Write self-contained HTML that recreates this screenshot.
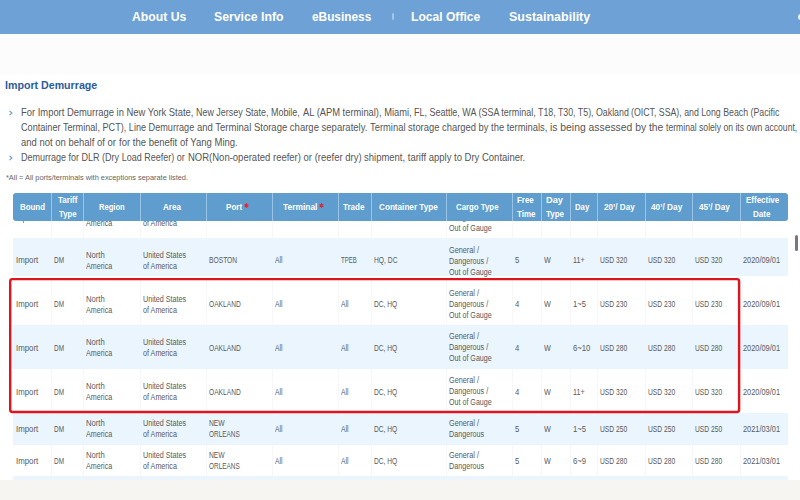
<!DOCTYPE html>
<html><head><meta charset="utf-8"><style>
html,body{margin:0;padding:0;}
body{width:800px;height:500px;overflow:hidden;position:relative;background:#fff;font-family:"Liberation Sans",sans-serif;}
.t{position:absolute;white-space:nowrap;transform-origin:0 0;}
.bar{position:absolute;left:0;top:0;width:800px;height:34px;background:#6ea1d6;}
.band{position:absolute;left:0;top:34px;width:800px;height:41px;background:#fcfcfc;}
.bul{position:absolute;}
.nsep{position:absolute;left:392px;top:12.5px;width:2px;height:7.5px;background:#a3c5ea;border-radius:1px;}
.row{position:absolute;left:13px;width:774.5px;}
.vl{position:absolute;width:1px;background:#f7f7f7;}
.thead{position:absolute;left:13px;top:192.5px;width:774.5px;height:28px;background:#5e9dcd;border-radius:3px;}
.hl{position:absolute;top:192.5px;height:28px;width:1px;background:#9ac3e8;}
.ast{position:absolute;}
.red{position:absolute;left:0;top:0;}
.foot{position:absolute;left:0;top:480.2px;width:800px;height:20px;background:#f7f5f1;}
.sb{position:absolute;left:795px;top:234.5px;width:3px;height:16px;background:#787878;border-radius:1.5px;}
.icn{position:absolute;left:798px;top:13.5px;width:6px;height:6px;border-radius:3px;background:#eef4fb;}
</style></head><body>
<div class="bar"></div>
<div class="band"></div>
<div class="nsep"></div>
<div class="t" style="left:132.00px;top:10.45px;font-size:13px;line-height:13px;color:#fff;font-weight:bold;transform:scaleX(0.9388);">About Us</div><div class="t" style="left:214.25px;top:10.45px;font-size:13px;line-height:13px;color:#fff;font-weight:bold;transform:scaleX(0.9429);">Service Info</div><div class="t" style="left:312.00px;top:10.45px;font-size:13px;line-height:13px;color:#fff;font-weight:bold;transform:scaleX(0.9106);">eBusiness</div><div class="t" style="left:411.25px;top:10.45px;font-size:13px;line-height:13px;color:#fff;font-weight:bold;transform:scaleX(0.9305);">Local Office</div><div class="t" style="left:509.40px;top:10.45px;font-size:13px;line-height:13px;color:#fff;font-weight:bold;transform:scaleX(0.9609);">Sustainability</div><div class="t" style="left:5.25px;top:80.06px;font-size:11px;line-height:11px;color:#2b5b9e;font-weight:bold;transform:scaleX(0.9673);">Import Demurrage</div><div class="t" style="left:21.25px;top:107.28px;font-size:10.5px;line-height:10.5px;color:#555;transform:scaleX(0.8951)">For Import Demurrage in New York State,</div><div class="t" style="left:196.25px;top:107.28px;font-size:10.5px;line-height:10.5px;color:#555;transform:scaleX(0.8508)">New Jersey State, Mobile,</div><div class="t" style="left:302.50px;top:107.28px;font-size:10.5px;line-height:10.5px;color:#555;transform:scaleX(0.8896)">AL (APM terminal), Miami,</div><div class="t" style="left:413.75px;top:107.28px;font-size:10.5px;line-height:10.5px;color:#555;transform:scaleX(0.8539)">FL, Seattle, WA (SSA terminal,</div><div class="t" style="left:538.00px;top:107.28px;font-size:10.5px;line-height:10.5px;color:#555;transform:scaleX(0.8394)">T18, T30, T5), Oakland</div><div class="t" style="left:631.25px;top:107.28px;font-size:10.5px;line-height:10.5px;color:#555;transform:scaleX(0.8357)">(OICT, SSA), and Long Beach (Pacific</div><div class="t" style="left:21.25px;top:122.28px;font-size:10.5px;line-height:10.5px;color:#555;transform:scaleX(0.8687)">Container Terminal, PCT), Line Demurrage</div><div class="t" style="left:197.00px;top:122.28px;font-size:10.5px;line-height:10.5px;color:#555;transform:scaleX(0.9055)">and Terminal Storage charge separately.</div><div class="t" style="left:370.00px;top:122.28px;font-size:10.5px;line-height:10.5px;color:#555;transform:scaleX(0.8940)">Terminal storage charged by the terminals,</div><div class="t" style="left:550.00px;top:122.28px;font-size:10.5px;line-height:10.5px;color:#555;transform:scaleX(0.9860)">is being assessed by the</div><div class="t" style="left:666.25px;top:122.28px;font-size:10.5px;line-height:10.5px;color:#555;transform:scaleX(0.8207)">terminal solely on its own account,</div><div class="t" style="left:21.25px;top:136.88px;font-size:10.5px;line-height:10.5px;color:#555;transform:scaleX(0.9028)">and not on behalf of or</div><div class="t" style="left:118.75px;top:136.88px;font-size:10.5px;line-height:10.5px;color:#555;transform:scaleX(0.9069)">for the benefit of Yang Ming.</div><div class="t" style="left:21.25px;top:152.28px;font-size:10.5px;line-height:10.5px;color:#555;transform:scaleX(0.8581)">Demurrage for DLR (Dry Load Reefer) or</div><div class="t" style="left:187.50px;top:152.28px;font-size:10.5px;line-height:10.5px;color:#555;transform:scaleX(0.9043)">NOR(Non-operated reefer) or (reefer dry)</div><div class="t" style="left:363.75px;top:152.28px;font-size:10.5px;line-height:10.5px;color:#555;transform:scaleX(0.9039)">shipment, tariff apply to Dry Container.</div><div class="t" style="left:5.50px;top:174.27px;font-size:7.5px;line-height:7.5px;color:#666;transform:scaleX(0.9823);">*All = All ports/terminals with exceptions separate listed.</div>
<svg class="bul" style="left:8px;top:109.60px" width="6" height="6" viewBox="0 0 6 6"><path d="M1.5 0.8 L4 3 L1.5 5.2" fill="none" stroke="#6d9bc8" stroke-width="1.1"/></svg><svg class="bul" style="left:8px;top:154.60px" width="6" height="6" viewBox="0 0 6 6"><path d="M1.5 0.8 L4 3 L1.5 5.2" fill="none" stroke="#6d9bc8" stroke-width="1.1"/></svg>
<div class="vl" style="left:51.0px;top:194px;height:44px"></div><div class="vl" style="left:82.75px;top:194px;height:44px"></div><div class="vl" style="left:139.5px;top:194px;height:44px"></div><div class="vl" style="left:205.75px;top:194px;height:44px"></div><div class="vl" style="left:272.0px;top:194px;height:44px"></div><div class="vl" style="left:337.5px;top:194px;height:44px"></div><div class="vl" style="left:371.25px;top:194px;height:44px"></div><div class="vl" style="left:445.75px;top:194px;height:44px"></div><div class="vl" style="left:512.0px;top:194px;height:44px"></div><div class="vl" style="left:540.75px;top:194px;height:44px"></div><div class="vl" style="left:569.5px;top:194px;height:44px"></div><div class="vl" style="left:597.0px;top:194px;height:44px"></div><div class="vl" style="left:644.5px;top:194px;height:44px"></div><div class="vl" style="left:692.0px;top:194px;height:44px"></div><div class="vl" style="left:739.5px;top:194px;height:44px"></div><div class="t" style="left:85.75px;top:207.91px;font-size:8.3px;line-height:8.3px;color:#5a5a5a;transform:scaleX(0.9239);">North</div><div class="t" style="left:85.75px;top:218.91px;font-size:8.3px;line-height:8.3px;color:#5a5a5a;transform:scaleX(0.8618);">America</div><div class="t" style="left:142.50px;top:207.91px;font-size:8.3px;line-height:8.3px;color:#5a5a5a;transform:scaleX(0.8678);">United States</div><div class="t" style="left:142.50px;top:218.91px;font-size:8.3px;line-height:8.3px;color:#5a5a5a;transform:scaleX(0.8660);">of America</div><div class="t" style="left:448.75px;top:202.41px;font-size:8.3px;line-height:8.3px;color:#5a5a5a;transform:scaleX(0.8784);">General /</div><div class="t" style="left:448.75px;top:213.41px;font-size:8.3px;line-height:8.3px;color:#5a5a5a;transform:scaleX(0.8677);">Dangerous /</div><div class="t" style="left:448.75px;top:224.41px;font-size:8.3px;line-height:8.3px;color:#5a5a5a;transform:scaleX(0.8577);">Out of Gauge</div><div class="row" style="top:238px;height:38.3px;background:#eaf5fd"></div><div class="t" style="left:15.50px;top:256.01px;font-size:8.3px;line-height:8.3px;color:#5a5a5a;transform:scaleX(0.9477);">Import</div><div class="t" style="left:54.00px;top:256.01px;font-size:8.3px;line-height:8.3px;color:#5a5a5a;transform:scaleX(0.7748);">DM</div><div class="t" style="left:85.75px;top:251.11px;font-size:8.3px;line-height:8.3px;color:#5a5a5a;transform:scaleX(0.9239);">North</div><div class="t" style="left:85.75px;top:262.11px;font-size:8.3px;line-height:8.3px;color:#5a5a5a;transform:scaleX(0.8618);">America</div><div class="t" style="left:142.50px;top:251.11px;font-size:8.3px;line-height:8.3px;color:#5a5a5a;transform:scaleX(0.8678);">United States</div><div class="t" style="left:142.50px;top:262.11px;font-size:8.3px;line-height:8.3px;color:#5a5a5a;transform:scaleX(0.8660);">of America</div><div class="t" style="left:208.75px;top:256.01px;font-size:8.3px;line-height:8.3px;color:#5a5a5a;transform:scaleX(0.8066);">BOSTON</div><div class="t" style="left:275.00px;top:256.01px;font-size:8.3px;line-height:8.3px;color:#5a5a5a;transform:scaleX(0.8141);">All</div><div class="t" style="left:340.50px;top:256.01px;font-size:8.3px;line-height:8.3px;color:#5a5a5a;transform:scaleX(0.7224);">TPEB</div><div class="t" style="left:374.25px;top:256.01px;font-size:8.3px;line-height:8.3px;color:#5a5a5a;transform:scaleX(0.8090);">HQ, DC</div><div class="t" style="left:448.75px;top:245.61px;font-size:8.3px;line-height:8.3px;color:#5a5a5a;transform:scaleX(0.8784);">General /</div><div class="t" style="left:448.75px;top:256.61px;font-size:8.3px;line-height:8.3px;color:#5a5a5a;transform:scaleX(0.8677);">Dangerous /</div><div class="t" style="left:448.75px;top:267.61px;font-size:8.3px;line-height:8.3px;color:#5a5a5a;transform:scaleX(0.8577);">Out of Gauge</div><div class="t" style="left:515.00px;top:256.01px;font-size:8.3px;line-height:8.3px;color:#5a5a5a;transform:scaleX(0.9300);">5</div><div class="t" style="left:543.75px;top:256.01px;font-size:8.3px;line-height:8.3px;color:#5a5a5a;transform:scaleX(0.8733);">W</div><div class="t" style="left:572.50px;top:256.01px;font-size:8.3px;line-height:8.3px;color:#5a5a5a;transform:scaleX(0.8627);">11+</div><div class="t" style="left:600.00px;top:256.01px;font-size:8.3px;line-height:8.3px;color:#5a5a5a;transform:scaleX(0.8072);">USD 320</div><div class="t" style="left:647.50px;top:256.01px;font-size:8.3px;line-height:8.3px;color:#5a5a5a;transform:scaleX(0.8072);">USD 320</div><div class="t" style="left:695.00px;top:256.01px;font-size:8.3px;line-height:8.3px;color:#5a5a5a;transform:scaleX(0.8072);">USD 320</div><div class="t" style="left:742.50px;top:256.01px;font-size:8.3px;line-height:8.3px;color:#5a5a5a;transform:scaleX(0.8907);">2020/09/01</div><div class="vl" style="left:51.0px;top:280px;height:45px"></div><div class="vl" style="left:82.75px;top:280px;height:45px"></div><div class="vl" style="left:139.5px;top:280px;height:45px"></div><div class="vl" style="left:205.75px;top:280px;height:45px"></div><div class="vl" style="left:272.0px;top:280px;height:45px"></div><div class="vl" style="left:337.5px;top:280px;height:45px"></div><div class="vl" style="left:371.25px;top:280px;height:45px"></div><div class="vl" style="left:445.75px;top:280px;height:45px"></div><div class="vl" style="left:512.0px;top:280px;height:45px"></div><div class="vl" style="left:540.75px;top:280px;height:45px"></div><div class="vl" style="left:569.5px;top:280px;height:45px"></div><div class="vl" style="left:597.0px;top:280px;height:45px"></div><div class="vl" style="left:644.5px;top:280px;height:45px"></div><div class="vl" style="left:692.0px;top:280px;height:45px"></div><div class="vl" style="left:739.5px;top:280px;height:45px"></div><div class="t" style="left:15.50px;top:299.81px;font-size:8.3px;line-height:8.3px;color:#5a5a5a;transform:scaleX(0.9477);">Import</div><div class="t" style="left:54.00px;top:299.81px;font-size:8.3px;line-height:8.3px;color:#5a5a5a;transform:scaleX(0.7748);">DM</div><div class="t" style="left:85.75px;top:294.61px;font-size:8.3px;line-height:8.3px;color:#5a5a5a;transform:scaleX(0.9239);">North</div><div class="t" style="left:85.75px;top:305.61px;font-size:8.3px;line-height:8.3px;color:#5a5a5a;transform:scaleX(0.8618);">America</div><div class="t" style="left:142.50px;top:294.61px;font-size:8.3px;line-height:8.3px;color:#5a5a5a;transform:scaleX(0.8678);">United States</div><div class="t" style="left:142.50px;top:305.61px;font-size:8.3px;line-height:8.3px;color:#5a5a5a;transform:scaleX(0.8660);">of America</div><div class="t" style="left:208.75px;top:299.81px;font-size:8.3px;line-height:8.3px;color:#5a5a5a;transform:scaleX(0.8003);">OAKLAND</div><div class="t" style="left:275.00px;top:299.81px;font-size:8.3px;line-height:8.3px;color:#5a5a5a;transform:scaleX(0.8141);">All</div><div class="t" style="left:340.50px;top:299.81px;font-size:8.3px;line-height:8.3px;color:#5a5a5a;transform:scaleX(0.8141);">All</div><div class="t" style="left:374.25px;top:299.81px;font-size:8.3px;line-height:8.3px;color:#5a5a5a;transform:scaleX(0.8003);">DC, HQ</div><div class="t" style="left:448.75px;top:289.11px;font-size:8.3px;line-height:8.3px;color:#5a5a5a;transform:scaleX(0.8784);">General /</div><div class="t" style="left:448.75px;top:300.11px;font-size:8.3px;line-height:8.3px;color:#5a5a5a;transform:scaleX(0.8677);">Dangerous /</div><div class="t" style="left:448.75px;top:311.11px;font-size:8.3px;line-height:8.3px;color:#5a5a5a;transform:scaleX(0.8577);">Out of Gauge</div><div class="t" style="left:515.00px;top:299.81px;font-size:8.3px;line-height:8.3px;color:#5a5a5a;transform:scaleX(0.9300);">4</div><div class="t" style="left:543.75px;top:299.81px;font-size:8.3px;line-height:8.3px;color:#5a5a5a;transform:scaleX(0.8733);">W</div><div class="t" style="left:572.50px;top:299.81px;font-size:8.3px;line-height:8.3px;color:#5a5a5a;transform:scaleX(0.9300);">1~5</div><div class="t" style="left:600.00px;top:299.81px;font-size:8.3px;line-height:8.3px;color:#5a5a5a;transform:scaleX(0.8072);">USD 230</div><div class="t" style="left:647.50px;top:299.81px;font-size:8.3px;line-height:8.3px;color:#5a5a5a;transform:scaleX(0.8072);">USD 230</div><div class="t" style="left:695.00px;top:299.81px;font-size:8.3px;line-height:8.3px;color:#5a5a5a;transform:scaleX(0.8072);">USD 230</div><div class="t" style="left:742.50px;top:299.81px;font-size:8.3px;line-height:8.3px;color:#5a5a5a;transform:scaleX(0.8907);">2020/09/01</div><div class="row" style="top:325px;height:44px;background:#eaf5fd"></div><div class="t" style="left:15.50px;top:343.61px;font-size:8.3px;line-height:8.3px;color:#5a5a5a;transform:scaleX(0.9477);">Import</div><div class="t" style="left:54.00px;top:343.61px;font-size:8.3px;line-height:8.3px;color:#5a5a5a;transform:scaleX(0.7748);">DM</div><div class="t" style="left:85.75px;top:337.51px;font-size:8.3px;line-height:8.3px;color:#5a5a5a;transform:scaleX(0.9239);">North</div><div class="t" style="left:85.75px;top:348.51px;font-size:8.3px;line-height:8.3px;color:#5a5a5a;transform:scaleX(0.8618);">America</div><div class="t" style="left:142.50px;top:337.51px;font-size:8.3px;line-height:8.3px;color:#5a5a5a;transform:scaleX(0.8678);">United States</div><div class="t" style="left:142.50px;top:348.51px;font-size:8.3px;line-height:8.3px;color:#5a5a5a;transform:scaleX(0.8660);">of America</div><div class="t" style="left:208.75px;top:343.61px;font-size:8.3px;line-height:8.3px;color:#5a5a5a;transform:scaleX(0.8003);">OAKLAND</div><div class="t" style="left:275.00px;top:343.61px;font-size:8.3px;line-height:8.3px;color:#5a5a5a;transform:scaleX(0.8141);">All</div><div class="t" style="left:340.50px;top:343.61px;font-size:8.3px;line-height:8.3px;color:#5a5a5a;transform:scaleX(0.8141);">All</div><div class="t" style="left:374.25px;top:343.61px;font-size:8.3px;line-height:8.3px;color:#5a5a5a;transform:scaleX(0.8003);">DC, HQ</div><div class="t" style="left:448.75px;top:332.01px;font-size:8.3px;line-height:8.3px;color:#5a5a5a;transform:scaleX(0.8784);">General /</div><div class="t" style="left:448.75px;top:343.01px;font-size:8.3px;line-height:8.3px;color:#5a5a5a;transform:scaleX(0.8677);">Dangerous /</div><div class="t" style="left:448.75px;top:354.01px;font-size:8.3px;line-height:8.3px;color:#5a5a5a;transform:scaleX(0.8577);">Out of Gauge</div><div class="t" style="left:515.00px;top:343.61px;font-size:8.3px;line-height:8.3px;color:#5a5a5a;transform:scaleX(0.9300);">4</div><div class="t" style="left:543.75px;top:343.61px;font-size:8.3px;line-height:8.3px;color:#5a5a5a;transform:scaleX(0.8733);">W</div><div class="t" style="left:572.50px;top:343.61px;font-size:8.3px;line-height:8.3px;color:#5a5a5a;transform:scaleX(0.9300);">6~10</div><div class="t" style="left:600.00px;top:343.61px;font-size:8.3px;line-height:8.3px;color:#5a5a5a;transform:scaleX(0.8072);">USD 280</div><div class="t" style="left:647.50px;top:343.61px;font-size:8.3px;line-height:8.3px;color:#5a5a5a;transform:scaleX(0.8072);">USD 280</div><div class="t" style="left:695.00px;top:343.61px;font-size:8.3px;line-height:8.3px;color:#5a5a5a;transform:scaleX(0.8072);">USD 280</div><div class="t" style="left:742.50px;top:343.61px;font-size:8.3px;line-height:8.3px;color:#5a5a5a;transform:scaleX(0.8907);">2020/09/01</div><div class="vl" style="left:51.0px;top:369px;height:44px"></div><div class="vl" style="left:82.75px;top:369px;height:44px"></div><div class="vl" style="left:139.5px;top:369px;height:44px"></div><div class="vl" style="left:205.75px;top:369px;height:44px"></div><div class="vl" style="left:272.0px;top:369px;height:44px"></div><div class="vl" style="left:337.5px;top:369px;height:44px"></div><div class="vl" style="left:371.25px;top:369px;height:44px"></div><div class="vl" style="left:445.75px;top:369px;height:44px"></div><div class="vl" style="left:512.0px;top:369px;height:44px"></div><div class="vl" style="left:540.75px;top:369px;height:44px"></div><div class="vl" style="left:569.5px;top:369px;height:44px"></div><div class="vl" style="left:597.0px;top:369px;height:44px"></div><div class="vl" style="left:644.5px;top:369px;height:44px"></div><div class="vl" style="left:692.0px;top:369px;height:44px"></div><div class="vl" style="left:739.5px;top:369px;height:44px"></div><div class="t" style="left:15.50px;top:387.61px;font-size:8.3px;line-height:8.3px;color:#5a5a5a;transform:scaleX(0.9477);">Import</div><div class="t" style="left:54.00px;top:387.61px;font-size:8.3px;line-height:8.3px;color:#5a5a5a;transform:scaleX(0.7748);">DM</div><div class="t" style="left:85.75px;top:381.71px;font-size:8.3px;line-height:8.3px;color:#5a5a5a;transform:scaleX(0.9239);">North</div><div class="t" style="left:85.75px;top:392.71px;font-size:8.3px;line-height:8.3px;color:#5a5a5a;transform:scaleX(0.8618);">America</div><div class="t" style="left:142.50px;top:381.71px;font-size:8.3px;line-height:8.3px;color:#5a5a5a;transform:scaleX(0.8678);">United States</div><div class="t" style="left:142.50px;top:392.71px;font-size:8.3px;line-height:8.3px;color:#5a5a5a;transform:scaleX(0.8660);">of America</div><div class="t" style="left:208.75px;top:387.61px;font-size:8.3px;line-height:8.3px;color:#5a5a5a;transform:scaleX(0.8003);">OAKLAND</div><div class="t" style="left:275.00px;top:387.61px;font-size:8.3px;line-height:8.3px;color:#5a5a5a;transform:scaleX(0.8141);">All</div><div class="t" style="left:340.50px;top:387.61px;font-size:8.3px;line-height:8.3px;color:#5a5a5a;transform:scaleX(0.8141);">All</div><div class="t" style="left:374.25px;top:387.61px;font-size:8.3px;line-height:8.3px;color:#5a5a5a;transform:scaleX(0.8003);">DC, HQ</div><div class="t" style="left:448.75px;top:376.21px;font-size:8.3px;line-height:8.3px;color:#5a5a5a;transform:scaleX(0.8784);">General /</div><div class="t" style="left:448.75px;top:387.21px;font-size:8.3px;line-height:8.3px;color:#5a5a5a;transform:scaleX(0.8677);">Dangerous /</div><div class="t" style="left:448.75px;top:398.21px;font-size:8.3px;line-height:8.3px;color:#5a5a5a;transform:scaleX(0.8577);">Out of Gauge</div><div class="t" style="left:515.00px;top:387.61px;font-size:8.3px;line-height:8.3px;color:#5a5a5a;transform:scaleX(0.9300);">4</div><div class="t" style="left:543.75px;top:387.61px;font-size:8.3px;line-height:8.3px;color:#5a5a5a;transform:scaleX(0.8733);">W</div><div class="t" style="left:572.50px;top:387.61px;font-size:8.3px;line-height:8.3px;color:#5a5a5a;transform:scaleX(0.8627);">11+</div><div class="t" style="left:600.00px;top:387.61px;font-size:8.3px;line-height:8.3px;color:#5a5a5a;transform:scaleX(0.8072);">USD 320</div><div class="t" style="left:647.50px;top:387.61px;font-size:8.3px;line-height:8.3px;color:#5a5a5a;transform:scaleX(0.8072);">USD 320</div><div class="t" style="left:695.00px;top:387.61px;font-size:8.3px;line-height:8.3px;color:#5a5a5a;transform:scaleX(0.8072);">USD 320</div><div class="t" style="left:742.50px;top:387.61px;font-size:8.3px;line-height:8.3px;color:#5a5a5a;transform:scaleX(0.8907);">2020/09/01</div><div class="row" style="top:413px;height:31.5px;background:#eaf5fd"></div><div class="t" style="left:15.50px;top:425.36px;font-size:8.3px;line-height:8.3px;color:#5a5a5a;transform:scaleX(0.9477);">Import</div><div class="t" style="left:54.00px;top:425.36px;font-size:8.3px;line-height:8.3px;color:#5a5a5a;transform:scaleX(0.7748);">DM</div><div class="t" style="left:85.75px;top:419.26px;font-size:8.3px;line-height:8.3px;color:#5a5a5a;transform:scaleX(0.9239);">North</div><div class="t" style="left:85.75px;top:430.26px;font-size:8.3px;line-height:8.3px;color:#5a5a5a;transform:scaleX(0.8618);">America</div><div class="t" style="left:142.50px;top:419.26px;font-size:8.3px;line-height:8.3px;color:#5a5a5a;transform:scaleX(0.8678);">United States</div><div class="t" style="left:142.50px;top:430.26px;font-size:8.3px;line-height:8.3px;color:#5a5a5a;transform:scaleX(0.8660);">of America</div><div class="t" style="left:208.75px;top:419.26px;font-size:8.3px;line-height:8.3px;color:#5a5a5a;transform:scaleX(0.8127);">NEW</div><div class="t" style="left:208.75px;top:430.26px;font-size:8.3px;line-height:8.3px;color:#5a5a5a;transform:scaleX(0.7751);">ORLEANS</div><div class="t" style="left:275.00px;top:425.36px;font-size:8.3px;line-height:8.3px;color:#5a5a5a;transform:scaleX(0.8141);">All</div><div class="t" style="left:340.50px;top:425.36px;font-size:8.3px;line-height:8.3px;color:#5a5a5a;transform:scaleX(0.8141);">All</div><div class="t" style="left:374.25px;top:425.36px;font-size:8.3px;line-height:8.3px;color:#5a5a5a;transform:scaleX(0.8003);">DC, HQ</div><div class="t" style="left:448.75px;top:419.26px;font-size:8.3px;line-height:8.3px;color:#5a5a5a;transform:scaleX(0.8784);">General /</div><div class="t" style="left:448.75px;top:430.26px;font-size:8.3px;line-height:8.3px;color:#5a5a5a;transform:scaleX(0.8673);">Dangerous</div><div class="t" style="left:515.00px;top:425.36px;font-size:8.3px;line-height:8.3px;color:#5a5a5a;transform:scaleX(0.9300);">5</div><div class="t" style="left:543.75px;top:425.36px;font-size:8.3px;line-height:8.3px;color:#5a5a5a;transform:scaleX(0.8733);">W</div><div class="t" style="left:572.50px;top:425.36px;font-size:8.3px;line-height:8.3px;color:#5a5a5a;transform:scaleX(0.9300);">1~5</div><div class="t" style="left:600.00px;top:425.36px;font-size:8.3px;line-height:8.3px;color:#5a5a5a;transform:scaleX(0.8072);">USD 250</div><div class="t" style="left:647.50px;top:425.36px;font-size:8.3px;line-height:8.3px;color:#5a5a5a;transform:scaleX(0.8072);">USD 250</div><div class="t" style="left:695.00px;top:425.36px;font-size:8.3px;line-height:8.3px;color:#5a5a5a;transform:scaleX(0.8072);">USD 250</div><div class="t" style="left:742.50px;top:425.36px;font-size:8.3px;line-height:8.3px;color:#5a5a5a;transform:scaleX(0.8907);">2021/03/01</div><div class="vl" style="left:51.0px;top:444.5px;height:31.75px"></div><div class="vl" style="left:82.75px;top:444.5px;height:31.75px"></div><div class="vl" style="left:139.5px;top:444.5px;height:31.75px"></div><div class="vl" style="left:205.75px;top:444.5px;height:31.75px"></div><div class="vl" style="left:272.0px;top:444.5px;height:31.75px"></div><div class="vl" style="left:337.5px;top:444.5px;height:31.75px"></div><div class="vl" style="left:371.25px;top:444.5px;height:31.75px"></div><div class="vl" style="left:445.75px;top:444.5px;height:31.75px"></div><div class="vl" style="left:512.0px;top:444.5px;height:31.75px"></div><div class="vl" style="left:540.75px;top:444.5px;height:31.75px"></div><div class="vl" style="left:569.5px;top:444.5px;height:31.75px"></div><div class="vl" style="left:597.0px;top:444.5px;height:31.75px"></div><div class="vl" style="left:644.5px;top:444.5px;height:31.75px"></div><div class="vl" style="left:692.0px;top:444.5px;height:31.75px"></div><div class="vl" style="left:739.5px;top:444.5px;height:31.75px"></div><div class="t" style="left:15.50px;top:457.18px;font-size:8.3px;line-height:8.3px;color:#5a5a5a;transform:scaleX(0.9477);">Import</div><div class="t" style="left:54.00px;top:457.18px;font-size:8.3px;line-height:8.3px;color:#5a5a5a;transform:scaleX(0.7748);">DM</div><div class="t" style="left:85.75px;top:450.88px;font-size:8.3px;line-height:8.3px;color:#5a5a5a;transform:scaleX(0.9239);">North</div><div class="t" style="left:85.75px;top:461.88px;font-size:8.3px;line-height:8.3px;color:#5a5a5a;transform:scaleX(0.8618);">America</div><div class="t" style="left:142.50px;top:450.88px;font-size:8.3px;line-height:8.3px;color:#5a5a5a;transform:scaleX(0.8678);">United States</div><div class="t" style="left:142.50px;top:461.88px;font-size:8.3px;line-height:8.3px;color:#5a5a5a;transform:scaleX(0.8660);">of America</div><div class="t" style="left:208.75px;top:450.88px;font-size:8.3px;line-height:8.3px;color:#5a5a5a;transform:scaleX(0.8127);">NEW</div><div class="t" style="left:208.75px;top:461.88px;font-size:8.3px;line-height:8.3px;color:#5a5a5a;transform:scaleX(0.7751);">ORLEANS</div><div class="t" style="left:275.00px;top:457.18px;font-size:8.3px;line-height:8.3px;color:#5a5a5a;transform:scaleX(0.8141);">All</div><div class="t" style="left:340.50px;top:457.18px;font-size:8.3px;line-height:8.3px;color:#5a5a5a;transform:scaleX(0.8141);">All</div><div class="t" style="left:374.25px;top:457.18px;font-size:8.3px;line-height:8.3px;color:#5a5a5a;transform:scaleX(0.8003);">DC, HQ</div><div class="t" style="left:448.75px;top:450.88px;font-size:8.3px;line-height:8.3px;color:#5a5a5a;transform:scaleX(0.8784);">General /</div><div class="t" style="left:448.75px;top:461.88px;font-size:8.3px;line-height:8.3px;color:#5a5a5a;transform:scaleX(0.8673);">Dangerous</div><div class="t" style="left:515.00px;top:457.18px;font-size:8.3px;line-height:8.3px;color:#5a5a5a;transform:scaleX(0.9300);">5</div><div class="t" style="left:543.75px;top:457.18px;font-size:8.3px;line-height:8.3px;color:#5a5a5a;transform:scaleX(0.8733);">W</div><div class="t" style="left:572.50px;top:457.18px;font-size:8.3px;line-height:8.3px;color:#5a5a5a;transform:scaleX(0.9300);">6~9</div><div class="t" style="left:600.00px;top:457.18px;font-size:8.3px;line-height:8.3px;color:#5a5a5a;transform:scaleX(0.8072);">USD 280</div><div class="t" style="left:647.50px;top:457.18px;font-size:8.3px;line-height:8.3px;color:#5a5a5a;transform:scaleX(0.8072);">USD 280</div><div class="t" style="left:695.00px;top:457.18px;font-size:8.3px;line-height:8.3px;color:#5a5a5a;transform:scaleX(0.8072);">USD 280</div><div class="t" style="left:742.50px;top:457.18px;font-size:8.3px;line-height:8.3px;color:#5a5a5a;transform:scaleX(0.8907);">2021/03/01</div><div class="row" style="top:476.25px;height:43.75px;background:#eaf5fd"></div><div class="t" style="left:15.50px;top:494.73px;font-size:8.3px;line-height:8.3px;color:#5a5a5a;transform:scaleX(0.9477);">Import</div><div class="t" style="left:54.00px;top:494.73px;font-size:8.3px;line-height:8.3px;color:#5a5a5a;transform:scaleX(0.7748);">DM</div><div class="t" style="left:85.75px;top:488.63px;font-size:8.3px;line-height:8.3px;color:#5a5a5a;transform:scaleX(0.9239);">North</div><div class="t" style="left:85.75px;top:499.63px;font-size:8.3px;line-height:8.3px;color:#5a5a5a;transform:scaleX(0.8618);">America</div><div class="t" style="left:142.50px;top:488.63px;font-size:8.3px;line-height:8.3px;color:#5a5a5a;transform:scaleX(0.8678);">United States</div><div class="t" style="left:142.50px;top:499.63px;font-size:8.3px;line-height:8.3px;color:#5a5a5a;transform:scaleX(0.8660);">of America</div><div class="t" style="left:208.75px;top:488.63px;font-size:8.3px;line-height:8.3px;color:#5a5a5a;transform:scaleX(0.8127);">NEW</div><div class="t" style="left:208.75px;top:499.63px;font-size:8.3px;line-height:8.3px;color:#5a5a5a;transform:scaleX(0.7751);">ORLEANS</div><div class="t" style="left:275.00px;top:494.73px;font-size:8.3px;line-height:8.3px;color:#5a5a5a;transform:scaleX(0.8141);">All</div><div class="t" style="left:340.50px;top:494.73px;font-size:8.3px;line-height:8.3px;color:#5a5a5a;transform:scaleX(0.8141);">All</div><div class="t" style="left:374.25px;top:494.73px;font-size:8.3px;line-height:8.3px;color:#5a5a5a;transform:scaleX(0.8003);">DC, HQ</div><div class="t" style="left:448.75px;top:488.63px;font-size:8.3px;line-height:8.3px;color:#5a5a5a;transform:scaleX(0.8784);">General /</div><div class="t" style="left:448.75px;top:499.63px;font-size:8.3px;line-height:8.3px;color:#5a5a5a;transform:scaleX(0.8673);">Dangerous</div><div class="t" style="left:515.00px;top:494.73px;font-size:8.3px;line-height:8.3px;color:#5a5a5a;transform:scaleX(0.9300);">5</div><div class="t" style="left:543.75px;top:494.73px;font-size:8.3px;line-height:8.3px;color:#5a5a5a;transform:scaleX(0.8733);">W</div><div class="t" style="left:572.50px;top:494.73px;font-size:8.3px;line-height:8.3px;color:#5a5a5a;transform:scaleX(0.9300);">10+</div><div class="t" style="left:600.00px;top:494.73px;font-size:8.3px;line-height:8.3px;color:#5a5a5a;transform:scaleX(0.9300);">USD 300</div><div class="t" style="left:647.50px;top:494.73px;font-size:8.3px;line-height:8.3px;color:#5a5a5a;transform:scaleX(0.9300);">USD 300</div><div class="t" style="left:695.00px;top:494.73px;font-size:8.3px;line-height:8.3px;color:#5a5a5a;transform:scaleX(0.9300);">USD 300</div><div class="t" style="left:742.50px;top:494.73px;font-size:8.3px;line-height:8.3px;color:#5a5a5a;transform:scaleX(0.8907);">2021/03/01</div>
<div class="thead"></div>
<div class="t" style="left:20.00px;top:202.31px;font-size:9.5px;line-height:9.5px;color:#fff;font-weight:bold;transform:scaleX(0.8315);">Bound</div><div class="t" style="left:58.00px;top:195.41px;font-size:9.5px;line-height:9.5px;color:#fff;font-weight:bold;transform:scaleX(0.8447);">Tariff</div><div class="t" style="left:58.75px;top:208.71px;font-size:9.5px;line-height:9.5px;color:#fff;font-weight:bold;transform:scaleX(0.8151);">Type</div><div class="t" style="left:99.25px;top:202.31px;font-size:9.5px;line-height:9.5px;color:#fff;font-weight:bold;transform:scaleX(0.7996);">Region</div><div class="t" style="left:162.50px;top:202.31px;font-size:9.5px;line-height:9.5px;color:#fff;font-weight:bold;transform:scaleX(0.8478);">Area</div><div class="t" style="left:225.80px;top:202.31px;font-size:9.5px;line-height:9.5px;color:#fff;font-weight:bold;transform:scaleX(0.8526);">Port</div><div class="t" style="left:282.60px;top:202.31px;font-size:9.5px;line-height:9.5px;color:#fff;font-weight:bold;transform:scaleX(0.8843);">Terminal</div><div class="t" style="left:343.00px;top:202.31px;font-size:9.5px;line-height:9.5px;color:#fff;font-weight:bold;transform:scaleX(0.8476);">Trade</div><div class="t" style="left:378.80px;top:202.31px;font-size:9.5px;line-height:9.5px;color:#fff;font-weight:bold;transform:scaleX(0.8591);">Container Type</div><div class="t" style="left:456.25px;top:202.31px;font-size:9.5px;line-height:9.5px;color:#fff;font-weight:bold;transform:scaleX(0.8246);">Cargo Type</div><div class="t" style="left:517.00px;top:195.41px;font-size:9.5px;line-height:9.5px;color:#fff;font-weight:bold;transform:scaleX(0.8356);">Free</div><div class="t" style="left:516.50px;top:208.71px;font-size:9.5px;line-height:9.5px;color:#fff;font-weight:bold;transform:scaleX(0.8412);">Time</div><div class="t" style="left:546.00px;top:195.41px;font-size:9.5px;line-height:9.5px;color:#fff;font-weight:bold;transform:scaleX(0.9752);">Day</div><div class="t" style="left:545.75px;top:208.71px;font-size:9.5px;line-height:9.5px;color:#fff;font-weight:bold;transform:scaleX(0.8384);">Type</div><div class="t" style="left:574.50px;top:202.31px;font-size:9.5px;line-height:9.5px;color:#fff;font-weight:bold;transform:scaleX(0.8174);">Day</div><div class="t" style="left:604.25px;top:202.31px;font-size:9.5px;line-height:9.5px;color:#fff;font-weight:bold;transform:scaleX(0.8563);">20’/ Day</div><div class="t" style="left:651.25px;top:202.31px;font-size:9.5px;line-height:9.5px;color:#fff;font-weight:bold;transform:scaleX(0.8702);">40’/ Day</div><div class="t" style="left:698.75px;top:202.31px;font-size:9.5px;line-height:9.5px;color:#fff;font-weight:bold;transform:scaleX(0.8563);">45’/ Day</div><div class="t" style="left:745.50px;top:195.41px;font-size:9.5px;line-height:9.5px;color:#fff;font-weight:bold;transform:scaleX(0.8393);">Effective</div><div class="t" style="left:752.50px;top:208.71px;font-size:9.5px;line-height:9.5px;color:#fff;font-weight:bold;transform:scaleX(0.8489);">Date</div><svg class="ast" style="left:244.00px;top:203.1px" width="5" height="5" viewBox="-2.5 -2.5 5 5"><path d="M0 -2.2V2.2M-1.9 -1.1L1.9 1.1M-1.9 1.1L1.9 -1.1" stroke="#e8222a" stroke-width="1.2"/></svg><svg class="ast" style="left:318.75px;top:203.1px" width="5" height="5" viewBox="-2.5 -2.5 5 5"><path d="M0 -2.2V2.2M-1.9 -1.1L1.9 1.1M-1.9 1.1L1.9 -1.1" stroke="#e8222a" stroke-width="1.2"/></svg><div class="hl" style="left:51.0px"></div><div class="hl" style="left:82.75px"></div><div class="hl" style="left:139.5px"></div><div class="hl" style="left:205.75px"></div><div class="hl" style="left:272.0px"></div><div class="hl" style="left:337.5px"></div><div class="hl" style="left:371.25px"></div><div class="hl" style="left:445.75px"></div><div class="hl" style="left:512.0px"></div><div class="hl" style="left:540.75px"></div><div class="hl" style="left:569.5px"></div><div class="hl" style="left:597.0px"></div><div class="hl" style="left:644.5px"></div><div class="hl" style="left:692.0px"></div><div class="hl" style="left:739.5px"></div>
<svg class="red" width="800" height="500" viewBox="0 0 800 500"><rect x="10.2" y="279.1" width="728.9" height="132.9" rx="2.2" ry="2.2" fill="none" stroke="#e0141e" stroke-width="2.4"/></svg>
<div style="position:absolute;left:23px;top:220.5px;width:1px;height:2px;background:#999"></div>
<div class="foot"></div>
<div class="sb"></div>
<div class="icn"></div>
</body></html>
